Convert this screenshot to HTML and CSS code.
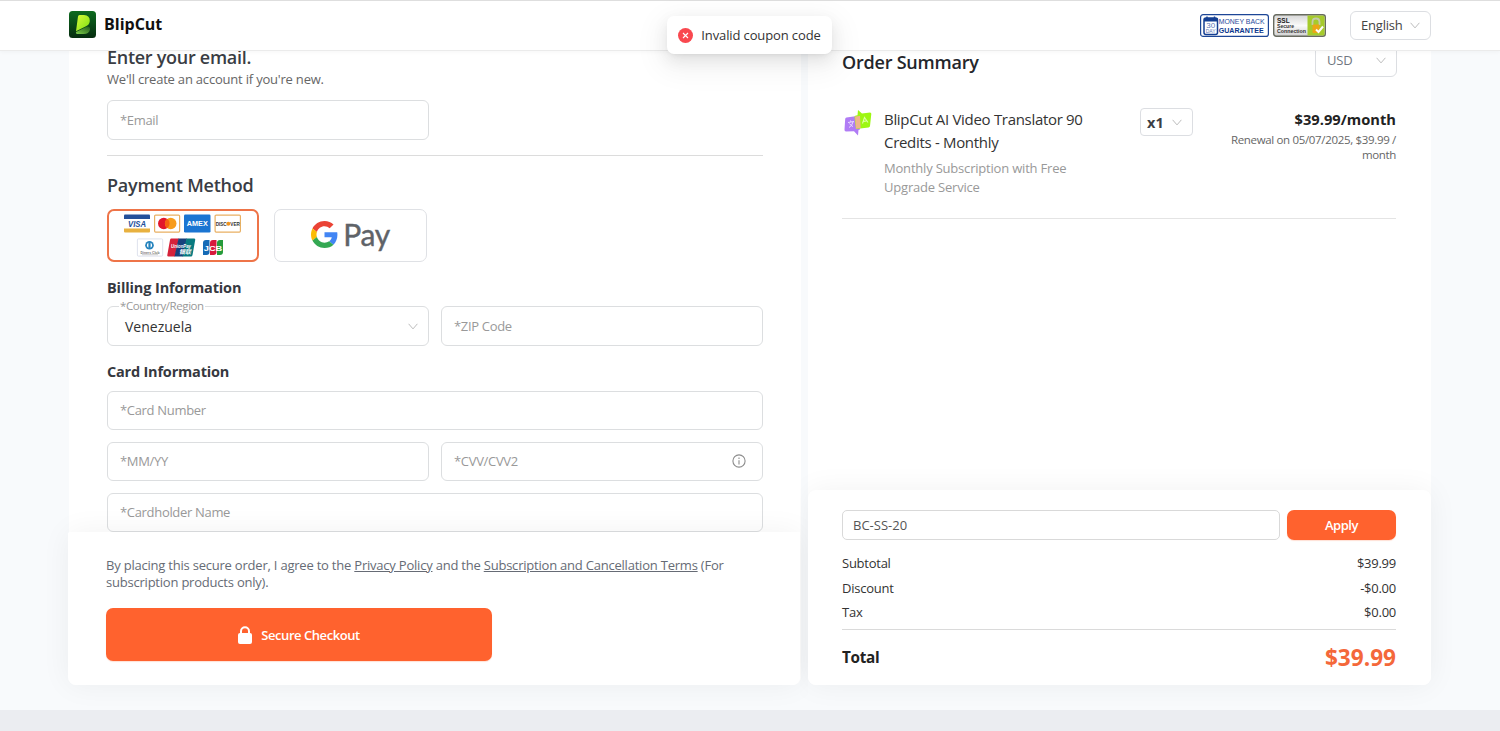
FILE: index.html
```html
<!DOCTYPE html>
<html lang="en">
<head>
<meta charset="utf-8">
<title>BlipCut Checkout</title>
<link rel="stylesheet" href="styles.css">
</head>
<body>
<header class="topbar">
  <div class="brand">
    <svg width="27" height="27" viewBox="0 0 27 27">
      <defs>
        <linearGradient id="lg1" x1="0" y1="0" x2="0" y2="1"><stop offset="0" stop-color="#0d6b1e"/><stop offset="1" stop-color="#062c10"/></linearGradient>
        <linearGradient id="lg2" x1="0" y1="0" x2="1" y2="1"><stop offset="0" stop-color="#d8fb3a"/><stop offset="1" stop-color="#7be012"/></linearGradient>
        <linearGradient id="lg3" x1="1" y1="0" x2="0" y2="1"><stop offset="0" stop-color="#1f5a1c"/><stop offset="1" stop-color="#7fd04a"/></linearGradient>
      </defs>
      <rect width="27" height="27" rx="3.500" fill="url(#lg1)"/>
      <path d="M7 21 18 15.500Q21.500 15.300 21 18.500 20 23 14.500 23H9Q6.500 23 7 21Z" fill="url(#lg3)"/>
      <path d="M10.500 4H15Q21 4.500 20.800 10 20.500 14 16.500 15.500L7 20.300 9 5.500Q9.200 4 10.500 4Z" fill="url(#lg2)"/>
    </svg>
    <span class="brand-name">BlipCut</span>
  </div>
  <div class="top-right">
    <svg class="seal" width="69" height="23" viewBox="0 0 69 23">
      <rect x=".6" y=".6" width="67.800" height="21.800" rx="2.500" fill="#fff" stroke="#1d4696" stroke-width="1.200"/>
      <rect x="4" y="4" width="13.500" height="16.500" rx="2" fill="#fff" stroke="#153f92" stroke-width="1.500"/>
      <path d="M4 4h13.500v3.500H4Z" fill="#153f92"/><path d="M7 2.500v3M14.500 2.500v3" stroke="#153f92" stroke-width="1.400"/>
      <text x="10.700" y="14.300" class="seal-num">30</text>
      <text x="10.700" y="19.200" class="seal-day">DAY</text>
      <text x="18.700" y="10.300" class="seal-a" textLength="46" lengthAdjust="spacingAndGlyphs">MONEY BACK</text>
      <text x="18.700" y="19" class="seal-b" textLength="45" lengthAdjust="spacingAndGlyphs">GUARANTEE</text>
    </svg>
    <svg class="ssl" width="53" height="23" viewBox="0 0 53 23">
      <defs><linearGradient id="gr" x1="0" y1="0" x2="0" y2="1"><stop offset="0" stop-color="#d6d6d6"/><stop offset=".5" stop-color="#fafafa"/><stop offset="1" stop-color="#d0d0d0"/></linearGradient></defs>
      <rect x=".7" y=".7" width="51.600" height="21.600" rx="2.500" fill="url(#gr)" stroke="#686b60" stroke-width="1.400"/>
      <path d="M34.500 1.400H50Q51.600 1.400 51.600 3v17Q51.600 21.600 50 21.600H34.500Z" fill="#a6cb2c"/>
      <path d="M39.500 11V8q0-3.500 3.500-3.500T46.500 8v3" fill="none" stroke="#c5cbaa" stroke-width="1.800"/>
      <rect x="39.500" y="10.500" width="7" height="8.500" rx="1" fill="#eca616"/>
      <path d="m43 15.500 2.500 2.500 4.500-5.500" fill="none" stroke="#fff" stroke-width="2"/>
      <text x="4" y="8.800" class="ssl-a">SSL</text>
      <text x="4" y="13.600" class="ssl-b" textLength="17" lengthAdjust="spacingAndGlyphs">Secure</text>
      <text x="4" y="18.900" class="ssl-b" textLength="29" lengthAdjust="spacingAndGlyphs">Connection</text>
    </svg>
    <div class="select lang"><span>English</span><svg class="chev" viewBox="0 0 10 7"><path d="M.6.8 5 5.900 9.400.8"/></svg></div>
  </div>
</header>
<main class="page">
  <section class="card left">
    <div class="form">
      <h2 class="title email-title">Enter your email.</h2>
      <p class="sub">We'll create an account if you're new.</p>
      <div class="field half email"><span>*Email</span></div>
      <div class="rule"></div>
      <h2 class="title pay-title">Payment Method</h2>
      <div class="methods">
        <div class="method active">
          <svg width="120" height="46" viewBox="0 0 120 46">
            <g transform="translate(1 1.500)">
              <rect width="26" height="18" fill="#fff"/><path d="M0 1q0-1 1-1h24q1 0 1 1v3.500H0Z" fill="#24509a"/><path d="M0 14h26v3q0 1-1 1H1q-1 0-1-1Z" fill="#e8b13f"/>
              <text x="13" y="12.600" class="visa" textLength="18" lengthAdjust="spacingAndGlyphs">VISA</text>
            </g>
            <g transform="translate(31 1.500)">
              <rect x=".6" y=".6" width="25" height="17" rx="1" fill="#fff" stroke="#e9b063" stroke-width="1.200"/>
              <circle cx="9.800" cy="9" r="5.800" fill="#e2152a"/><circle cx="16.700" cy="9" r="5.800" fill="#f79c1c"/><path d="M13.250 4.350a5.800 5.800 0 0 1 0 9.300 5.800 5.800 0 0 1 0-9.300Z" fill="#f5600f"/>
            </g>
            <g transform="translate(61 1.500)"><rect width="26.500" height="18" rx="1.200" fill="#1b75d2"/><text x="13.300" y="11.600" class="amex" textLength="21" lengthAdjust="spacingAndGlyphs">AMEX</text></g>
            <g transform="translate(91.500 1.500)"><rect x=".6" y=".6" width="25.300" height="17" rx="1" fill="#fff" stroke="#e9b063" stroke-width="1.200"/><text x="1.200" y="11.300" class="disc" textLength="11" lengthAdjust="spacingAndGlyphs">DISC</text><circle cx="13.800" cy="9.300" r="2" fill="#f0931e"/><text x="15.800" y="11.300" class="disc" textLength="9.500" lengthAdjust="spacingAndGlyphs">VER</text></g>
            <g transform="translate(14 25.500)"><rect x=".4" y=".4" width="25.300" height="17.200" rx="1" fill="#fff" stroke="#d5dbe8" stroke-width=".8"/><circle cx="12.500" cy="6.800" r="4.300" fill="#2583bd"/><path d="M11.400 4.300a2.800 2.800 0 0 0 0 5ZM13.600 4.300a2.800 2.800 0 0 1 0 5Z" fill="#fff"/><text x="13" y="15" class="diners" textLength="19" lengthAdjust="spacingAndGlyphs">Diners Club</text><path d="M5 16.200h16" stroke="#aaa" stroke-width=".6"/></g>
            <g transform="translate(44 25.500)"><path d="M4 0h8L8 18H1.500Q0 18 .3 16.500L3 1.500Q3.200 0 4 0Z" fill="#d6213a"/><path d="M11.500 0h8.500l-4 18H7.500Z" fill="#17407b"/><path d="M19.500 0H27q1.500 0 1.200 1.500L25.500 16.500Q25.200 18 24 18h-8.500Z" fill="#087a80"/><text x="4" y="9" class="up" textLength="20" lengthAdjust="spacingAndGlyphs">UnionPay</text><text x="12" y="15.300" class="up cjk" textLength="12" lengthAdjust="spacingAndGlyphs">银联</text></g>
            <g transform="translate(80 27)"><path d="M3 0h3.500v12q0 3-3 3H0V3q0-3 3-3Z" fill="#156ab6"/><path d="M10 0h3.500v12q0 3-3 3H7V3q0-3 3-3Z" fill="#d7183c"/><path d="M17 0h3v12q0 3-3 3h-3V3q0-3 3-3Z" fill="#259b3b"/><text x="10" y="10.500" class="jcb" textLength="18.500" lengthAdjust="spacingAndGlyphs">JCB</text></g>
          </svg>
        </div>
        <div class="method gpay">
          <svg width="27" height="27" viewBox="0 0 48 48"><path fill="#EA4335" d="M24 9.500c3.540 0 6.710 1.220 9.210 3.600l6.850-6.850C35.900 2.380 30.470 0 24 0 14.620 0 6.510 5.380 2.560 13.220l7.980 6.190C12.430 13.720 17.740 9.500 24 9.500z"/><path fill="#4285F4" d="M46.980 24.550c0-1.570-.15-3.090-.38-4.550H24v9.020h12.940c-.58 2.960-2.260 5.480-4.780 7.180l7.730 6c4.510-4.180 7.090-10.360 7.090-17.650z"/><path fill="#FBBC05" d="M10.530 28.590c-.48-1.450-.76-2.990-.76-4.590s.27-3.140.76-4.590l-7.980-6.190C.92 16.460 0 20.120 0 24c0 3.880.92 7.540 2.560 10.780l7.970-6.190z"/><path fill="#34A853" d="M24 48c6.480 0 11.930-2.130 15.890-5.810l-7.730-6c-2.150 1.450-4.920 2.300-8.160 2.300-6.260 0-11.570-4.220-13.470-9.910l-7.980 6.190C6.510 42.620 14.620 48 24 48z"/></svg>
          <span class="gpay-text">Pay</span>
        </div>
      </div>
      <h3 class="group">Billing Information</h3>
      <div class="row">
        <div class="field country"><span class="float">*Country/Region</span><span class="value">Venezuela</span><svg class="chev" viewBox="0 0 10 7"><path d="M.6.8 5 5.900 9.400.8"/></svg></div>
        <div class="field"><span>*ZIP Code</span></div>
      </div>
      <h3 class="group card-info">Card Information</h3>
      <div class="stack">
        <div class="field"><span>*Card Number</span></div>
        <div class="row">
          <div class="field"><span>*MM/YY</span></div>
          <div class="field"><span>*CVV/CVV2</span><svg class="info" width="14" height="14" viewBox="0 0 14 14"><circle cx="7" cy="7" r="6.100" fill="none" stroke="#8c8c8c" stroke-width="1.100"/><path d="M7 6.200v4.300M7 3.600v1.300" stroke="#8c8c8c" stroke-width="1.100"/></svg></div>
        </div>
        <div class="field"><span>*Cardholder Name</span></div>
      </div>
    </div>
    <div class="checkout">
      <p class="terms">By placing this secure order, I agree to the <a>Privacy Policy</a> and the <a>Subscription and Cancellation Terms</a> (For<br>subscription products only).</p>
      <button class="btn secure"><svg width="14" height="18" viewBox="0 0 14 18"><rect y="7" width="14" height="11" rx="2" fill="#fff"/><path d="M3 8.500V5.200a4 4 0 0 1 8 0v3.300" fill="none" stroke="#fff" stroke-width="2"/></svg><span>Secure Checkout</span></button>
    </div>
  </section>
  <section class="card right">
    <div class="order">
      <div class="order-head"><h2 class="title">Order Summary</h2><div class="select usd"><span>USD</span><svg class="chev" viewBox="0 0 10 7"><path d="M.6.8 5 5.900 9.400.8"/></svg></div></div>
      <div class="item">
        <svg class="prod" width="28" height="28" viewBox="0 0 28 28">
          <path d="M2.500 8.500 13 7l3 13.500-1.500.5-.5 5.500-4-4.200-8 .2Q.3 22.500.5 20.500L1.200 10Q1.300 8.700 2.500 8.500Z" fill="#b07cf5"/>
          <path d="M14 1l4 3.500 8-1q1.500 0 1.300 1.500L26 17q-.2 1.300-1.500 1.500L12 20l-1.500-12q0-1.300 1.500-1.500l1.500-.2Z" fill="#9df711"/>
          <path d="M11 7.500 16 7l.6 12-4.600.7Z" fill="#efb58a"/>
          <path d="m18.500 14.500 2-6 3.500 5M19.500 12.500l3-.6" fill="none" stroke="#dcffa8" stroke-width="1.100"/>
          <path d="m4 13.500 6-1M6.500 11.500l.5 1.500M9 13q-1 4-4 5.500M5.500 14.500q1.500 2.500 3.500 3" fill="none" stroke="#eadcff" stroke-width="1"/>
        </svg>
        <div class="desc"><p class="name">BlipCut AI Video Translator 90<br>Credits - Monthly</p><p class="detail">Monthly Subscription with Free<br>Upgrade Service</p></div>
        <div class="select qty"><span>x1</span><svg class="chev" viewBox="0 0 10 7"><path d="M.6.8 5 5.900 9.400.8"/></svg></div>
        <div class="cost"><p class="price">$39.99/month</p><p class="renew">Renewal on 05/07/2025, $39.99 /<br>month</p></div>
      </div>
      <div class="rule"></div>
    </div>
    <div class="totals">
      <div class="coupon"><div class="code">BC-SS-20</div><button class="btn apply">Apply</button></div>
      <div class="lines">
        <div class="line"><span>Subtotal</span><span>$39.99</span></div>
        <div class="line"><span>Discount</span><span>-$0.00</span></div>
        <div class="line"><span>Tax</span><span>$0.00</span></div>
      </div>
      <div class="total"><span>Total</span><span class="sum">$39.99</span></div>
    </div>
  </section>
</main>
<footer class="strip"></footer>
<div class="toast"><svg width="15" height="15" viewBox="0 0 15 15"><circle cx="7.500" cy="7.500" r="7.500" fill="#f9484f"/><path d="m5 5 5 5m0-5-5 5" stroke="#fff" stroke-width="1.100"/></svg><span>Invalid coupon code</span></div>
</body>
</html>
```
FILE: styles.css
```css
* { box-sizing: border-box; }
body { margin: 0; height: 731px; overflow: hidden; display: flex; flex-direction: column; font-family: "Open Sans", "Noto Sans", sans-serif; font-size: 13px; color: #333; background: #f8fafc; }
h2, h3, p { margin: 0; }
.topbar { height: 51px; flex: none; padding: 0 69px; background: #fff; border-top: 1px solid #dedede; border-bottom: 1px solid #ebebeb; box-shadow: 0 1px 4px rgba(0,0,0,.04); display: flex; align-items: center; justify-content: space-between; position: relative; z-index: 5; }
.brand { display: flex; align-items: center; gap: 8px; padding-bottom: 2px; }
.brand-name { font-size: 16px; line-height: 22px; font-weight: 700; color: #111; padding-bottom: 2px; }
.top-right { display: flex; align-items: center; }
.seal { margin-right: 4px; }
.ssl { margin-right: 24px; }
.seal text, .ssl text { font-family: "Liberation Sans", sans-serif; }
.seal .seal-num { font-size: 8px; fill: #5b78b5; text-anchor: middle; }
.seal .seal-day { font-size: 5px; fill: #5b78b5; text-anchor: middle; }
.seal .seal-a { font-size: 7.5px; fill: #1f4a9c; }
.seal .seal-b { font-size: 7.6px; font-weight: 700; fill: #0c388e; }
.ssl .ssl-a { font-size: 6.5px; font-weight: 700; fill: #222; }
.ssl .ssl-b { font-size: 5px; font-weight: 700; fill: #333; }
.select { display: flex; align-items: center; justify-content: space-between; border: 1px solid #dcdee2; border-radius: 6px; background: #fff; }
.chev { width: 10px; height: 7px; flex: none; }
.chev path { fill: none; stroke: #bdbdbd; stroke-width: 1; }
.lang { width: 81px; height: 29px; padding: 0 10px 1px; letter-spacing: -.2px; color: #444; }
.page { height: 659px; flex: none; padding: 0 69px 25px 69px; display: flex; gap: 7px; }
.card { display: flex; flex-direction: column; background: #fff; border-radius: 0 0 8px 8px; height: 634px; }
.left { width: 732px; }
.right { width: 623px; }
.form { height: 481px; flex: none; padding: 0 38px; }
.title { line-height: 28px; font-size: 18px; font-weight: 600; letter-spacing: -.22px; color: #3a3d44; white-space: nowrap; }
.email-title { margin-top: -8px; letter-spacing: -.28px; }
.sub { line-height: 16px; letter-spacing: -.2px; color: #666; }
.field { position: relative; flex: 1; height: 40px; display: flex; align-items: center; justify-content: space-between; padding: 0 16px 0 12px; border: 1px solid #dcdee0; border-radius: 6px; color: #999; letter-spacing: -.32px; background: #fff; }
.email { width: 322px; margin-top: 13px; }
.rule { height: 1px; margin-top: 15px; background: #dcdcdc; }
.pay-title { margin-top: 15px; }
.methods { display: flex; gap: 15px; margin-top: 10px; }
.method { width: 153px; height: 53px; border: 1px solid #dfe1e5; border-radius: 7px; display: flex; align-items: center; justify-content: center; }
.method.active { width: 152px; border: 2px solid #ee7448; }
.method text { font-family: "Liberation Sans", sans-serif; font-weight: 700; }
.visa { font-size: 8.5px; font-style: italic; fill: #24509a; text-anchor: middle; }
.amex { font-size: 6.8px; fill: #fff; text-anchor: middle; }
.disc { font-size: 5.2px; fill: #333; }
.diners { font-size: 4px; fill: #777; text-anchor: middle; }
.up { font-size: 6px; font-style: italic; fill: #fff; }
.method .cjk { font-family: "Noto Sans CJK SC", sans-serif; }
.jcb { font-size: 8px; fill: #fff; text-anchor: middle; }
.gpay { gap: 5px; padding-bottom: 3px; }
.gpay-text { font: 400 30px/34px Lato, sans-serif; color: #5f6368; letter-spacing: -.3px; -webkit-text-stroke: .4px #5f6368; }
.group { margin-top: 15px; line-height: 22px; font-size: 14.5px; font-weight: 700; letter-spacing: -.12px; color: #36393f; }
.row { display: flex; gap: 12px; }
.group + .row { margin-top: 7px; }
.country { flex: none; width: 322px; padding: 0 10px 0 17px; color: #333; font-size: 14px; letter-spacing: 0; }
.float { position: absolute; top: -9px; left: 11px; padding: 0 1px; line-height: 15px; font-size: 11.5px; letter-spacing: -.42px; color: #999; background: linear-gradient(#fff, #fff) 0 8px / 100% 2px no-repeat; }
.card-info { letter-spacing: -.2px; }
.stack { display: flex; flex-direction: column; gap: 12px; margin-top: 8px; }
.stack .field { height: 39px; flex: none; padding-bottom: 1px; }
.stack .row .field { flex: 1; }
.checkout { position: relative; width: 732px; margin-left: -1px; height: 153px; padding: 25px 38px 0; border-radius: 0 0 8px 8px; box-shadow: 0 0 30px rgba(0,0,0,.055); background: linear-gradient(#fff, #fff) 0 1px no-repeat; clip-path: inset(-30px -8px -50px -30px); }
.terms { line-height: 17px; letter-spacing: -.215px; color: #666b75; white-space: nowrap; }
.terms a { text-decoration: underline; }
.btn { border: 0; background: #ff622e; color: #fff; font: 600 13px "Open Sans", sans-serif; letter-spacing: -.45px; display: flex; align-items: center; justify-content: center; box-shadow: 0 1px 1px rgba(255,98,46,.2); }
.secure { width: 386px; height: 53px; margin-top: 17px; border-radius: 7px; gap: 9px; }
.order { height: 439px; flex: none; padding: 0 35px 0 34px; }
.order-head { display: flex; justify-content: space-between; align-items: flex-start; }
.order-head .title { margin-top: -3px; color: #24262b; }
.usd { width: 82px; height: 37px; margin: -11px -1px 0 0; padding: 3px 10px 0 11px; color: #707780; letter-spacing: -.2px; }
.item { display: flex; align-items: flex-start; margin-top: 31px; height: 110px; }
.prod { margin: 1px 12px 0 2px; flex: none; }
.desc { width: 256px; white-space: nowrap; }
.name { line-height: 23px; font-size: 15px; letter-spacing: -.31px; color: #333; }
.detail { margin-top: 5px; line-height: 19px; letter-spacing: -.2px; color: #999; }
.qty { width: 53px; height: 28px; border-radius: 4px; padding: 0 10px 0 6px; font-size: 14.5px; font-weight: 700; color: #3c3f45; }
.cost { flex: 1; text-align: right; white-space: nowrap; }
.price { line-height: 22px; font-size: 14.7px; font-weight: 700; color: #222; }
.renew { margin-top: 2px; line-height: 15px; font-size: 11.5px; letter-spacing: -.33px; color: #666; }
.order .rule { margin-top: 0; background: #e4e4e4; }
.totals { position: relative; height: 195px; padding: 20px 35px 0 34px; border-radius: 8px; background: #fff; box-shadow: 0 0 30px rgba(0,0,0,.055); clip-path: inset(-30px -30px -50px -8px); }
.coupon { display: flex; gap: 7px; }
.code { flex: 1; height: 30px; line-height: 28px; padding-left: 10px; border: 1px solid #d9d9d9; border-radius: 5px; color: #555; }
.apply { width: 109px; height: 30px; border-radius: 7px; }
.lines { margin-top: 11px; padding-bottom: 4px; border-bottom: 1px solid #dadada; }
.line { display: flex; justify-content: space-between; line-height: 24.6px; letter-spacing: -.25px; }
.total { display: flex; justify-content: space-between; align-items: center; height: 55px; font-size: 15.3px; letter-spacing: -.3px; font-weight: 700; color: #222; }
.sum { font-size: 22.6px; letter-spacing: 0; color: #f4683a; }
.strip { flex: 1; background: #ebedf1; }
.toast { position: absolute; left: 667px; top: 16px; width: 165px; height: 38px; z-index: 10; border-radius: 7px; background: #fff; box-shadow: 0 6px 16px rgba(0,0,0,.08), 0 3px 6px -4px rgba(0,0,0,.12), 0 9px 28px 8px rgba(0,0,0,.05); display: flex; align-items: center; justify-content: center; gap: 8px; white-space: nowrap; letter-spacing: -.12px; color: #333; }
```
